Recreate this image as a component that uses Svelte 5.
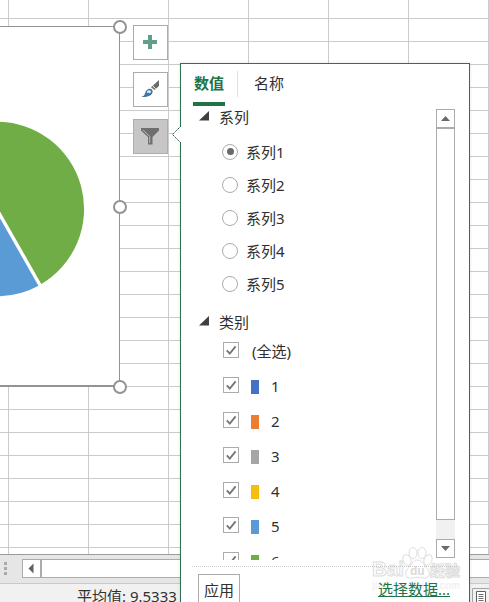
<script>
    let tab = $state("values");
    let series = $state(1);

    const seriesList = [1, 2, 3, 4, 5];
    let categories = $state([
        { name: "(全选)", color: null, checked: true },
        { name: "1", color: "#4472c4", checked: true },
        { name: "2", color: "#ed7d31", checked: true },
        { name: "3", color: "#a5a5a5", checked: true },
        { name: "4", color: "#f5bd0c", checked: true },
        { name: "5", color: "#5b9bd5", checked: true },
        { name: "6", color: "#70ad47", checked: true },
    ]);
</script>

<div class="window">
    <div class="sheet">
        <div class="chart">
            <svg width="119" height="359" viewBox="0 27 119 359">
                <path d="M-4 209.5V122A87.5 87.5 0 0 1 40 285.5Z" fill="#70ad47" />
                <path d="M-4 209.5L39.5 286A87.5 87.5 0 0 1 -4 297Z" fill="#5b9bd5" />
                <path d="M-4 208.6L42 289.5" stroke="#fff" stroke-width="3.4" />
            </svg>
            <span class="handle top"></span>
            <span class="handle middle"></span>
            <span class="handle bottom"></span>
        </div>

        <div class="chart-tools">
            <button aria-label="图表元素">
                <svg width="33" height="33" viewBox="0 0 33 33">
                    <path d="M14 9h4v5h5v4h-5v5h-4v-5H9v-4h5z" fill="#5f9f8b" />
                </svg>
            </button>
            <button aria-label="图表样式">
                <svg width="33" height="33" viewBox="0 0 33 33">
                    <path d="M25 7v6l-4.500 4-3.500-2.800z" fill="#6b6b6b" />
                    <path d="M18.500 12.800l3.200 3" stroke="#fff" stroke-width="1" />
                    <path d="M15.800 15.800c2 .2 3 1.600 2.800 3.200-.6 4.200-6 5.300-11.400 4.900 2.800-1 3.300-2 4-4 .7-2.500 2.600-4.200 4.600-4.100z" fill="#3f75a8" />
                    <path d="M12.800 19c.6-2.300 4-2.600 4.200-.2.100 1.600-1.700 1.700-2.300.7-.5.900-1.500.9-1.900-.5z" fill="#dceaf6" />
                </svg>
            </button>
            <button class="active" aria-label="图表筛选器">
                <svg width="33" height="33" viewBox="0 0 33 33">
                    <path d="M7 8h18v2.500l-6.500 6.500v7.500h-4.500V17L7 10.500z" fill="#6e6e6e" />
                    <path d="M9 9.800l6.700 6.700v6.500" fill="none" stroke="#bdbdbd" stroke-width="1" />
                </svg>
            </button>
        </div>
    </div>

    <div class="hscroll">
        <span class="grip"><i></i><i></i><i></i></span>
        <div class="hbar">
            <span class="hbtn">
                <svg width="17" height="17" viewBox="0 0 17 17"><path d="M10.500 3.500v10L5.500 8.500z" fill="#606060" /></svg>
            </span>
        </div>
    </div>

    <div class="status">
        <span>平均值: 9.5333</span>
        <svg class="view" width="20" height="20" viewBox="0 0 20 20">
            <path d="M.5 20V4.500H20" fill="none" stroke="#a5a5a5" />
            <path d="M4.500 7.500h9v11h-9z" fill="#fff" stroke="#606060" />
            <path d="M6.500 10.500h5M6.500 12.500h5M6.500 14.500h5M6.500 16.500h5" stroke="#707070" />
        </svg>
    </div>

    <div class="popup">
        <svg class="pointer" width="11" height="20" viewBox="0 0 11 20">
            <path d="M11 0L1.500 9.500L11 19" fill="#fff" />
            <path d="M10 1L1.500 9.500L10 18" fill="none" stroke="#31584b" stroke-dasharray="1.800 .7" />
        </svg>

        <div class="tabs">
            <button class:selected={tab === "values"} onclick={() => (tab = "values")}>数值</button>
            <span class="divider"></span>
            <button class:selected={tab === "names"} onclick={() => (tab = "names")}>名称</button>
        </div>

        <div class="body">
            <div class="list">
                <div class="heading">
                    <svg width="10" height="10"><path d="M10 0v9.500H0z" fill="#404040" /></svg>
                    系列
                </div>
                <div class="radios">
                    {#each seriesList as n}
                        <button class="row radio-row" onclick={() => (series = n)}>
                            <span class="radio" class:on={series === n}></span>
                            系列{n}
                        </button>
                    {/each}
                </div>

                <div class="heading">
                    <svg width="10" height="10"><path d="M10 0v9.500H0z" fill="#404040" /></svg>
                    类别
                </div>
                {#each categories as cat}
                    <button class="row check-row" onclick={() => (cat.checked = !cat.checked)}>
                        <span class="check">
                            {#if cat.checked}
                                <svg width="14" height="14" viewBox="0 0 14 14">
                                    <path d="M2.800 7.300l3 3.300 5.800-7.200" fill="none" stroke="#777" stroke-width="1.900" />
                                </svg>
                            {/if}
                        </span>
                        {#if cat.color}
                            <span class="swatch" style="background: {cat.color}"></span>
                        {/if}
                        <span class="name">{cat.name}</span>
                    </button>
                {/each}
            </div>

            <div class="vscroll">
                <span class="vbtn"><svg width="9" height="5"><path d="M0 5L4.500 0L9 5z" fill="#6a6a6a" /></svg></span>
                <span class="thumb"></span>
                <span class="track"></span>
                <span class="vbtn"><svg width="9" height="5"><path d="M0 0h9L4.500 5z" fill="#6a6a6a" /></svg></span>
            </div>
        </div>

        <div class="footer">
            <button class="apply">应用</button>
            <span class="link">选择数据...</span>
        </div>

        <svg class="watermark" width="112" height="56" viewBox="0 0 112 56">
            <g fill="#fff" stroke="#dedede" stroke-width="1">
                <ellipse cx="36" cy="20" rx="4" ry="5.500" transform="rotate(-20 36 20)" />
                <ellipse cx="42" cy="13" rx="4" ry="5.500" />
                <ellipse cx="51" cy="13" rx="4" ry="5.500" />
                <ellipse cx="57" cy="20" rx="4" ry="5.500" transform="rotate(20 57 20)" />
                <path d="M46.500 20c5 0 6 5 10 9 4 5 1 10-4 9-4-1-8-1-12 0-5 1-8-4-4-9 4-4 5-9 10-9z" />
                <text x="1" y="36" font-size="20" textLength="32" lengthAdjust="spacingAndGlyphs">Bai</text>
                <text x="59" y="36" font-size="15">经验</text>
            </g>
            <text x="39" y="35" font-size="12" fill="#dadada">du</text>
            <text x="1" y="49" font-size="10" fill="#f1f1f1" textLength="88">jingyan.baidu.com</text>
        </svg>
    </div>
</div>

<style>
    :global(body) {
        margin: 0;
    }

    .window {
        position: relative;
        width: 489px;
        height: 602px;
        overflow: hidden;
        display: flex;
        flex-direction: column;
        background: #fff;
        color: #303030;
        font-family: "Noto Sans", "Noto Sans CJK SC", sans-serif;
        font-size: 15px;
    }

    button {
        font: inherit;
        color: inherit;
        margin: 0;
        padding: 0;
        border: none;
        background: none;
    }

    svg {
        display: block;
        flex: none;
    }

    .sheet {
        position: relative;
        height: 554px;
        background-image: linear-gradient(to right, #cbcbcb 1px, transparent 1px),
            linear-gradient(to bottom, #cbcbcb 1px, transparent 1px);
        background-size: 80px 23px;
        background-position: 8px 18px;
    }

    .chart {
        position: absolute;
        left: -1px;
        top: 26px;
        width: 120px;
        height: 358px;
        border: solid #939393;
        border-width: 1px 1px 2px 0;
        background: #fff;
    }

    .chart svg {
        margin-left: 1px;
        height: 358px;
    }

    .handle {
        position: absolute;
        right: -8px;
        width: 10px;
        height: 10px;
        border: 2px solid #939393;
        border-radius: 50%;
        background: #fff;
    }

    .handle.top {
        top: -7px;
    }

    .handle.middle {
        top: 173px;
    }

    .handle.bottom {
        bottom: -9px;
    }

    .chart-tools {
        position: absolute;
        left: 133px;
        top: 25px;
        display: flex;
        flex-direction: column;
        gap: 12px;
    }

    .chart-tools button {
        width: 35px;
        height: 35px;
        box-sizing: border-box;
        border: 1px solid #ababab;
        background: #fff;
    }

    .chart-tools .active {
        background: #c6c6c6;
        border-color: #9fb5ad;
    }

    .hscroll {
        display: flex;
        align-items: center;
        height: 30px;
        box-sizing: border-box;
        border-top: 1px solid #9b9b9b;
        border-bottom: 1px solid #c9c9c9;
        padding-bottom: 1px;
        background: #e6e6e6;
    }

    .grip {
        display: flex;
        flex-direction: column;
        gap: 2px;
        width: 18px;
        padding-left: 4px;
    }

    .grip i {
        width: 3px;
        height: 3px;
        background: #a9a9a9;
    }

    .hbar {
        flex: 1;
        height: 17px;
        border: solid #ababab;
        border-width: 1px 0 1px 1px;
        background: #fff;
    }

    .hbtn {
        display: block;
        width: 17px;
        height: 17px;
        border-right: 2px solid #ababab;
    }

    .status {
        display: flex;
        justify-content: space-between;
        height: 18px;
        padding-left: 77px;
        background: #f1f1f1;
    }

    .status span {
        line-height: 24px;
        white-space: nowrap;
    }

    .view {
        margin-right: -3px;
    }

    .popup {
        position: absolute;
        left: 180px;
        top: 63px;
        width: 290px;
        height: 545px;
        box-sizing: border-box;
        border: 1px solid #31704f;
        background: #fff;
        box-shadow: 0 0 3px rgba(60, 120, 90, 0.18);
    }

    .pointer {
        position: absolute;
        left: -10px;
        top: 61px;
    }

    .tabs {
        display: flex;
        height: 42px;
        padding-left: 12px;
    }

    .tabs button {
        width: 32px;
        box-sizing: border-box;
        padding-bottom: 1px;
        border-bottom: 4px solid transparent;
        white-space: nowrap;
    }

    .tabs .selected {
        color: #217346;
        font-weight: bold;
        border-color: #217346;
    }

    .divider {
        width: 1px;
        height: 26px;
        margin: 7px 15px 0 12px;
        background: #e1e1e1;
    }

    .body {
        display: flex;
        justify-content: space-between;
        height: 454px;
        padding-right: 14px;
    }

    .list {
        flex: 1;
        overflow: hidden;
        margin-top: -1px;
    }

    .heading {
        display: flex;
        align-items: center;
        gap: 10px;
        height: 22px;
        padding-left: 18px;
    }

    .radios {
        padding: 8px 0 10px;
    }

    .row {
        display: flex;
        align-items: center;
        width: 100%;
        padding-left: 41px;
        text-align: left;
    }

    .radio-row {
        height: 33px;
        gap: 8px;
    }

    .radio {
        display: flex;
        align-items: center;
        justify-content: center;
        width: 14px;
        height: 14px;
        border: 1px solid #ababab;
        border-radius: 50%;
    }

    .radio.on::after {
        content: "";
        width: 7px;
        height: 7px;
        border-radius: 50%;
        background: #6a6a6a;
    }

    .check-row {
        height: 35px;
        padding-left: 42px;
    }

    .check {
        width: 14px;
        height: 14px;
        border: 1px solid #ababab;
    }

    .swatch {
        width: 8px;
        height: 14px;
        margin: 4px 0 0 12px;
    }

    .name {
        margin: 2px 0 0 12px;
    }

    .check + .name {
        margin-left: 13px;
    }

    .vscroll {
        display: flex;
        flex-direction: column;
        width: 19px;
        height: 449px;
        margin-top: 3px;
    }

    .vbtn {
        display: flex;
        align-items: center;
        justify-content: center;
        height: 17px;
        border: 1px solid #ababab;
    }

    .thumb {
        flex: 1;
        border: 1px solid #ababab;
    }

    .track {
        height: 19px;
        background: #f1f1f1;
    }

    .footer {
        position: relative;
        z-index: 1;
        display: flex;
        justify-content: space-between;
        margin: 6px 10px 0 11px;
        padding: 7px 9px 0 6px;
        border-top: 1px dotted #c8c8c8;
    }

    .apply {
        width: 42px;
        height: 34px;
        box-sizing: border-box;
        border: 1px solid #ababab;
        padding-bottom: 4px;
    }

    .link {
        line-height: 30px;
        color: #217346;
        text-decoration: underline;
    }

    .watermark {
        position: absolute;
        left: 190px;
        top: 476px;
        font-family: "Liberation Sans", "Noto Sans CJK SC", sans-serif;
        font-weight: bold;
    }
</style>
